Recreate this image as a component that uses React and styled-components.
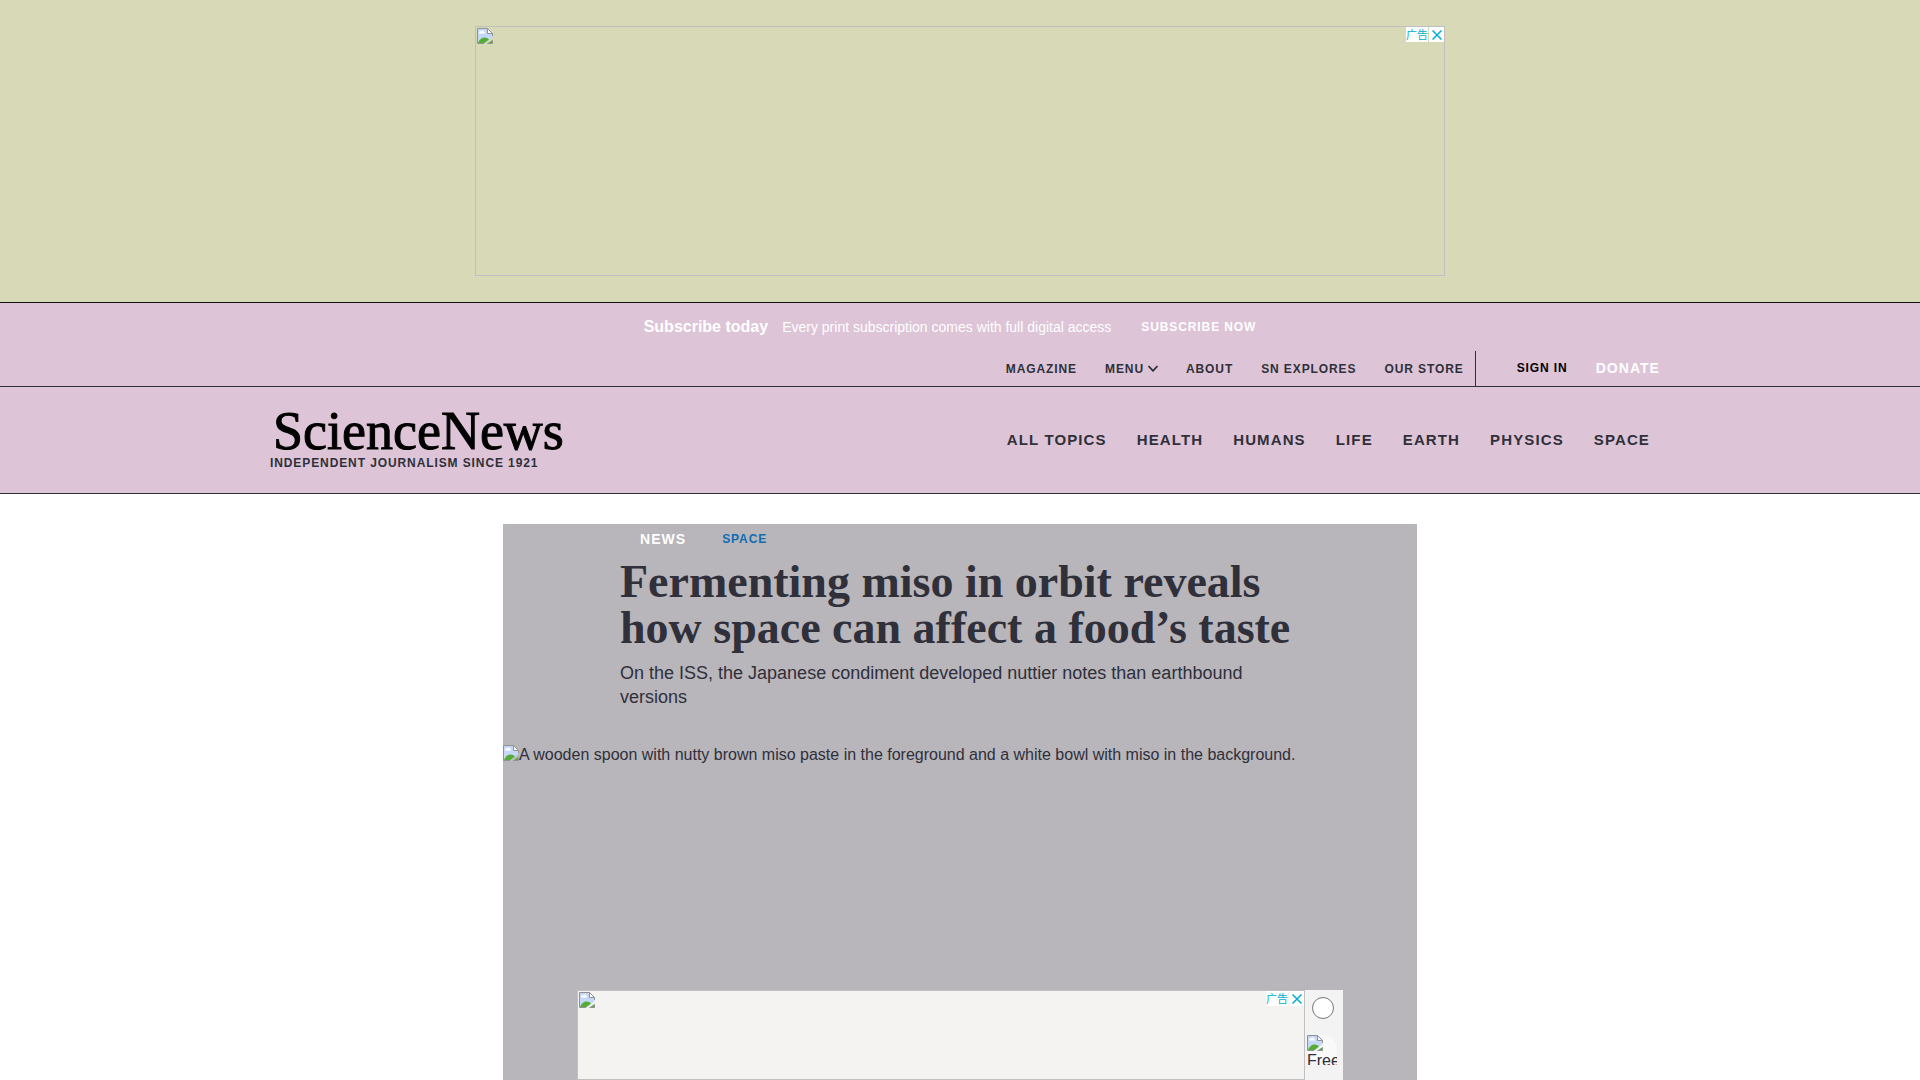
import React from "react";
import styled, { createGlobalStyle } from "styled-components";

const ink = "#2f303a";
const pink = "#ddc4d7";

const GlobalStyle = createGlobalStyle`
  *, *::before, *::after { box-sizing: border-box; }
  body {
    margin: 0;
    background: #fff;
    color: ${ink};
    font-family: "Liberation Sans", Arial, "Noto Sans CJK SC", sans-serif;
    font-size: 16px;
    overflow-x: hidden;
  }
  h1, p, ul { margin: 0; padding: 0; }
  ul { list-style: none; }
  a { color: inherit; text-decoration: none; }
  svg { display: block; flex: none; }
`;

const AdZone = styled.aside`
  display: flex;
  justify-content: center;
  padding: 26px 0;
  background: #d8d9b7;
  border-bottom: 1px solid #121212;
`;

const AdFrame = styled.div`
  display: flex;
  justify-content: space-between;
  align-items: flex-start;
  width: ${(p) => p.$width}px;
  height: ${(p) => p.$height}px;
  border: 1px solid #c0c0c0;
  background: ${(p) => p.$fill || "transparent"};
`;

const IconInset = styled.span`
  padding: 1px;
`;

const AdTools = styled.div`
  display: flex;
  gap: 1px;
`;

const AdLabel = styled.a`
  width: 22px;
  height: 15px;
  background: #fff;
  color: #00aecd;
  font-family: "Noto Sans CJK SC", sans-serif;
  font-size: 11px;
  line-height: 15px;
  text-align: center;
  white-space: nowrap;
`;

const AdClose = styled.button`
  display: flex;
  align-items: center;
  justify-content: center;
  width: 15px;
  height: 15px;
  padding: 0;
  border: 0;
  background: #fff;
`;

const Header = styled.header`
  background: ${pink};
  border-bottom: 1px solid ${ink};
`;

const Promo = styled.div`
  display: flex;
  align-items: center;
  justify-content: center;
  height: 48px;
  padding-right: 20px;
  color: #fff;
  font-size: 14px;

  strong { margin-right: 14px; font-size: 16px; }
  a { margin-left: 30px; font-size: 12px; font-weight: 700; letter-spacing: 0.075em; }
`;

const UtilityBar = styled.div`
  border-bottom: 1px solid ${ink};
`;

const UtilityInner = styled.div`
  display: flex;
  justify-content: flex-end;
  max-width: 1400px;
  height: 35px;
  margin: 0 auto;
  font-size: 12px;
  font-weight: 700;

  a, button { letter-spacing: 0.075em; }
`;

const UtilityList = styled.ul`
  display: flex;
  align-items: center;
  gap: 28px;
  padding-right: 11px;
  border-right: 1px solid ${ink};
`;

const MenuButton = styled.button`
  display: flex;
  align-items: center;
  gap: 4px;
  padding: 0;
  border: 0;
  background: none;
  color: inherit;
  font: inherit;
`;

const Account = styled.div`
  display: flex;
  align-items: center;
  gap: 28px;
  padding-left: 41px;
  padding-bottom: 2px;
`;

const SignIn = styled.a`
  color: #000;
`;

const Donate = styled.a`
  color: #fff;
  font-size: 14px;
`;

const Masthead = styled.div`
  display: flex;
  align-items: center;
  justify-content: space-between;
  max-width: 1380px;
  height: 106px;
  margin: 0 auto;
  padding-bottom: 2px;
`;

const Brand = styled.a`
  display: flex;
  flex-direction: column;
`;

const Wordmark = styled.span`
  padding-left: 3px;
  color: #000;
  font-family: "Liberation Serif", "Times New Roman", serif;
  font-size: 54px;
  line-height: 48px;
  -webkit-text-stroke: 1px #000;
`;

const Tagline = styled.span`
  font-size: 12px;
  font-weight: 700;
  line-height: 16px;
  letter-spacing: 0.075em;
`;

const TopicList = styled.ul`
  display: flex;
  gap: 30px;
  font-size: 15px;
  font-weight: 700;
  letter-spacing: 0.075em;
`;

const Article = styled.article`
  max-width: 914px;
  min-height: calc(100vh - 524px);
  margin: 30px auto 0;
  background: #b8b5bb;
`;

const ArticleHead = styled.header`
  max-width: 797px;
  margin-left: auto;
  padding-right: 117px;
`;

const Eyebrow = styled.div`
  display: flex;
  align-items: center;
  gap: 36px;
  height: 30px;
  padding-left: 20px;
  font-size: 12px;
  font-weight: 700;

  a { letter-spacing: 0.075em; }
`;

const Category = styled.a`
  color: #fff;
  font-size: 14px;
`;

const Topic = styled.a`
  color: #0f6db4;
`;

const Title = styled.h1`
  padding-top: 5px;
  font-family: "Liberation Serif", "Times New Roman", serif;
  font-size: 46px;
  font-weight: 700;
  line-height: 46px;
`;

const Deck = styled.p`
  padding-top: 10px;
  font-size: 18px;
  line-height: 24px;
`;

const Figure = styled.figure`
  display: flex;
  align-items: flex-start;
  margin: 36px 0 0;
  line-height: 20px;
`;

const StickyAd = styled.aside`
  position: fixed;
  bottom: 0;
  left: 0;
  right: 0;
  display: flex;
  justify-content: center;
`;

const SidePanel = styled.div`
  display: flex;
  flex-direction: column;
  align-items: center;
  width: 38px;
  padding-top: 7px;
  padding-right: 2px;
  background: #f4f3f3;
`;

const RoundButton = styled.button`
  width: 22px;
  height: 22px;
  padding: 0;
  border: 1px solid #777;
  border-radius: 50%;
  background: #fff;
`;

const FreeBadge = styled.a`
  display: block;
  width: 30px;
  height: 30px;
  margin-top: 16px;
  margin-right: 2px;
  overflow: hidden;
  background: radial-gradient(circle, #f9f9f9 15px, transparent 15px);
  line-height: 20px;
`;

function MissingImage() {
  return (
    <svg width="16" height="16" viewBox="0 0 16 16" aria-hidden="true">
      <path d="M.5 .5h10l5 5V9L8 15.500H.5z" fill="#c5d8f7" />
      <path d="M2 5c0-1.300 1-2 2-1.600C5 2 7 2.500 7.200 4 8.500 4 8.500 5.500 7.500 5.500h-5z" fill="#fff" />
      <path d="M1 15c1-3 3.500-5.500 6.500-5.500 2 0 3.500.7 4.500 2L7.500 15zM10.500 15.500l5-3.500v3.500z" fill="#56ad33" />
      <path d="M10.500 .5v5h5z" fill="#fff" />
      <path
        d="M15.500 8V5.500l-5-5H.5v15H7M10.500 .5v5h5M10.500 15.500h5v-3"
        fill="none"
        stroke="#929292"
      />
    </svg>
  );
}

function AdControls() {
  return (
    <AdTools>
      <AdLabel href="#ad-choices">广告</AdLabel>
      <AdClose aria-label="Close ad">
        <svg width="10" height="10" viewBox="0 0 10 10">
          <path d="M.5 .5l9 9M9.500 .5l-9 9" stroke="#00aecd" strokeWidth="1.500" />
        </svg>
      </AdClose>
    </AdTools>
  );
}

const topics = ["ALL TOPICS", "HEALTH", "HUMANS", "LIFE", "EARTH", "PHYSICS", "SPACE"];

export default function App() {
  return (
    <>
      <GlobalStyle />
      <AdZone>
        <AdFrame $width={970} $height={250}>
          <IconInset><MissingImage /></IconInset>
          <AdControls />
        </AdFrame>
      </AdZone>

      <Header>
        <Promo>
          <strong>Subscribe today</strong>
          <span>Every print subscription comes with full digital access</span>
          <a href="#subscribe">SUBSCRIBE NOW</a>
        </Promo>
        <UtilityBar>
          <UtilityInner>
            <UtilityList>
              <li><a href="#magazine">MAGAZINE</a></li>
              <li>
                <MenuButton>
                  MENU
                  <svg width="10" height="7" viewBox="0 0 10 7">
                    <path d="M.5 1L5 5.800 9.500 1" fill="none" stroke={ink} strokeWidth="1.800" />
                  </svg>
                </MenuButton>
              </li>
              <li><a href="#about">ABOUT</a></li>
              <li><a href="#explores">SN EXPLORES</a></li>
              <li><a href="#store">OUR STORE</a></li>
            </UtilityList>
            <Account>
              <SignIn href="#sign-in">SIGN IN</SignIn>
              <Donate href="#donate">DONATE</Donate>
            </Account>
          </UtilityInner>
        </UtilityBar>
        <Masthead>
          <Brand href="#home">
            <Wordmark>ScienceNews</Wordmark>
            <Tagline>INDEPENDENT JOURNALISM SINCE 1921</Tagline>
          </Brand>
          <nav aria-label="Topics">
            <TopicList>
              {topics.map((name) => (
                <li key={name}><a href="#topics">{name}</a></li>
              ))}
            </TopicList>
          </nav>
        </Masthead>
      </Header>

      <main>
        <Article>
          <ArticleHead>
            <Eyebrow>
              <Category href="#news">NEWS</Category>
              <Topic href="#space">SPACE</Topic>
            </Eyebrow>
            <Title>Fermenting miso in orbit reveals how space can affect a food’s taste</Title>
            <Deck>
              On the ISS, the Japanese condiment developed nuttier notes than earthbound versions
            </Deck>
          </ArticleHead>
          <Figure>
            <MissingImage />
            <span>
              A wooden spoon with nutty brown miso paste in the foreground and a white bowl with
              miso in the background.
            </span>
          </Figure>
        </Article>
      </main>

      <StickyAd>
        <AdFrame $width={728} $height={90} $fill="#f5f3f2">
          <IconInset><MissingImage /></IconInset>
          <AdControls />
        </AdFrame>
        <SidePanel>
          <RoundButton aria-label="Collapse ad" />
          <FreeBadge href="#free"><MissingImage />Free</FreeBadge>
        </SidePanel>
      </StickyAd>
    </>
  );
}
